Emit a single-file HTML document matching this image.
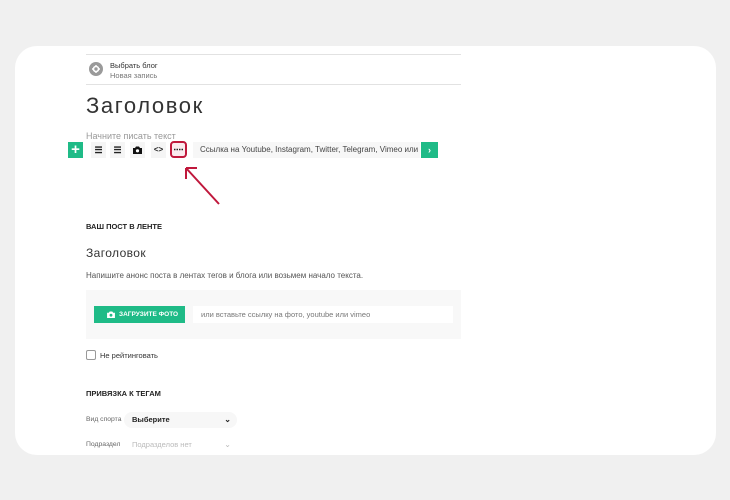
<!DOCTYPE html>
<html><head><meta charset="utf-8"><style>
*{margin:0;padding:0;box-sizing:border-box}
body{width:730px;height:500px;background:#f0f0f0;font-family:"Liberation Sans",sans-serif;position:relative;overflow:hidden;color:#222}
.card{position:absolute;left:15px;top:46px;width:701px;height:409px;background:#fff;border-radius:22px}
.a{position:absolute;white-space:nowrap}
.hl{position:absolute;left:86px;width:375px;height:1px;background:#e2e2e2}
.tb{position:absolute;top:142px;width:15px;height:16px;background:#f5f5f5;font-size:9px;text-align:center;line-height:16px;font-weight:bold}
.green{background:#1fbb87;color:#fff}
.sel{position:absolute;left:124px;width:113px;height:16px;background:#f7f7f7;border-radius:8px;font-size:7.5px;line-height:16px;padding-left:8px}
</style></head><body>
<div class="card"></div>
<div class="hl" style="top:54px"></div>
<div class="hl" style="top:84px"></div>
<div class="a" style="left:89px;top:62px;width:14px;height:14px;border-radius:50%;background:#9a9a9a"></div>
<svg class="a" style="left:91px;top:64px" width="10" height="10" viewBox="0 0 10 10"><circle cx="5" cy="5" r="2.5" fill="none" stroke="#fff" stroke-width="1.6"/><path d="M5 1v1.5M5 7.5V9M1 5h1.5M7.5 5H9" stroke="#fff" stroke-width="1.4"/></svg>
<div class="a" style="left:110px;top:61px;font-size:7.5px;color:#333">Выбрать блог</div>
<div class="a" style="left:110px;top:71px;font-size:7.5px;color:#777">Новая запись</div>
<div class="a" style="left:86px;top:93px;font-size:22px;color:#333;letter-spacing:1.6px">Заголовок</div>
<div class="a" style="left:86px;top:131px;font-size:9px;color:#999">Начните писать текст</div>
<div class="tb green" style="left:68px;font-size:15px;font-weight:bold;line-height:15px">+</div>
<div class="tb" style="left:91px">☰</div>
<div class="tb" style="left:110px">☰</div>
<div class="tb" style="left:130px"><svg width="9" height="8" viewBox="0 0 9 8" style="margin-top:4px"><path d="M0 2h2l1-1.5h3L7 2h2v6H0z" fill="#111"/><circle cx="4.5" cy="4.8" r="1.6" fill="#fff"/></svg></div>
<div class="tb" style="left:151px;font-size:8px">&lt;&gt;</div>
<div class="tb" style="left:170px;top:141px;width:17px;height:17px;border:2px solid #c0183c;border-radius:4px;background:#fbeaee"><svg width="9" height="3" style="position:absolute;left:2px;top:5px"><path d="M0 1.5h9" stroke="#222" stroke-width="1.5" stroke-dasharray="1.5 1"/></svg></div>
<div class="a" style="left:193px;top:142px;width:227px;height:16px;background:#f7f7f7;font-size:8px;color:#444;line-height:16px;padding-left:7px;overflow:hidden">Ссылка на Youtube, Instagram, Twitter, Telegram, Vimeo или URL с</div>
<div class="tb green" style="left:421px;width:17px">›</div>
<svg class="a" style="left:180px;top:160px" width="45" height="48"><path d="M39 44L6 8M6 8v11M6 8h11" stroke="#c0183c" stroke-width="2" fill="none"/></svg>
<div class="a" style="left:86px;top:222px;font-size:7.5px;font-weight:bold;color:#222">ВАШ ПОСТ В ЛЕНТЕ</div>
<div class="a" style="left:86px;top:246px;font-size:12px;color:#333;letter-spacing:0.4px">Заголовок</div>
<div class="a" style="left:86px;top:271px;font-size:8px;color:#555">Напишите анонс поста в лентах тегов и блога или возьмем начало текста.</div>
<div class="a" style="left:86px;top:290px;width:375px;height:49px;background:#f8f8f8"></div>
<div class="a" style="left:94px;top:306px;width:91px;height:17px;background:#1fbb87;color:#fff;font-size:6.5px;font-weight:bold;line-height:17px;padding-left:25px">ЗАГРУЗИТЕ ФОТО</div>
<svg class="a" style="left:107px;top:311px" width="8" height="7" viewBox="0 0 9 8"><path d="M0 2h2l1-1.5h3L7 2h2v6H0z" fill="#fff"/><circle cx="4.5" cy="4.8" r="1.6" fill="#1fbb87"/></svg>
<div class="a" style="left:193px;top:306px;width:260px;height:17px;background:#fff;font-size:7.5px;color:#777;line-height:17px;padding-left:8px">или вставьте ссылку на фото, youtube или vimeo</div>
<div class="a" style="left:86px;top:350px;width:10px;height:10px;border:1px solid #999;border-radius:2px"></div>
<div class="a" style="left:100px;top:351px;font-size:7.5px;color:#333">Не рейтинговать</div>
<div class="a" style="left:86px;top:389px;font-size:7.5px;font-weight:bold;color:#222">ПРИВЯЗКА К ТЕГАМ</div>
<div class="a" style="left:86px;top:416px;font-size:6.8px;color:#666">Вид спорта</div>
<div class="sel" style="top:412px;font-weight:bold;color:#222">Выберите<span style="position:absolute;right:6px;font-size:8px">⌄</span></div>
<div class="a" style="left:86px;top:441px;font-size:6.8px;color:#666">Подраздел</div>
<div class="sel" style="top:437px;background:#fff;color:#bbb">Подразделов нет<span style="position:absolute;right:6px;font-size:8px">⌄</span></div>
</body></html>
